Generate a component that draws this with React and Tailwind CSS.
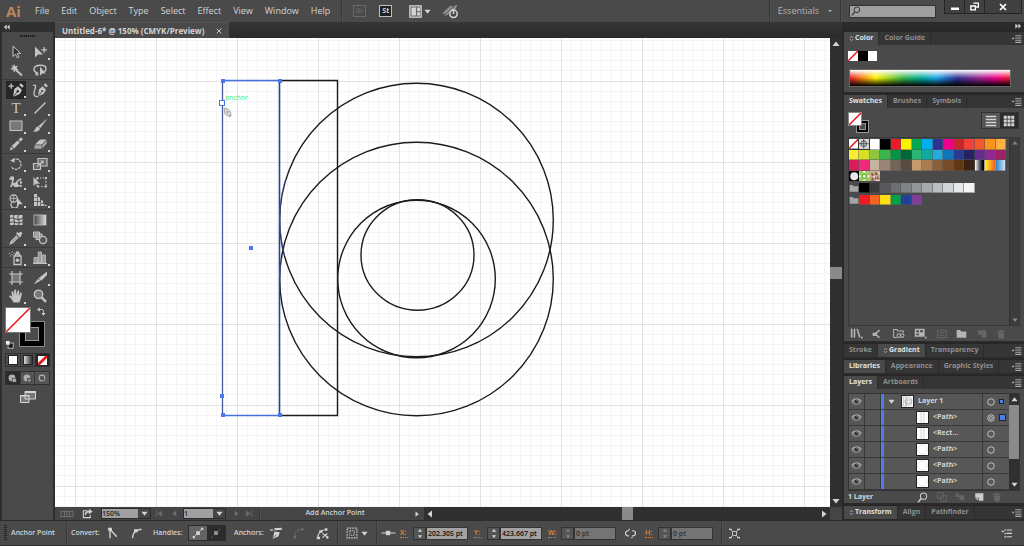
import React, { useState } from "react";
import clsx from "clsx";

const menus = ["File", "Edit", "Object", "Type", "Select", "Effect", "View", "Window", "Help"];

const Icon = ({ children, className = "w-4 h-4" }) => (
  <svg viewBox="0 0 16 16" fill="currentColor" className={clsx("shrink-0", className)} aria-hidden="true">
    {children}
  </svg>
);

const Line = ({ d, w = 1.2, ...rest }) => (
  <path d={d} fill="none" stroke="currentColor" strokeWidth={w} {...rest} />
);

/* Tool icons, all on a 16px grid */
const icons = {
  select: <path d="M5 2v10.5l2.6-2.4 1.7 3.8 1.7-.8-1.7-3.7h3.4z" fill="#333" stroke="currentColor" />,
  directSelect: (
    <>
      <path d="M3 2.5v11l3-2.9h5z" />
      <path d="M11.5 3h1.3v2.200H15v1.300h-2.200v2.200h-1.300V6.500H9.300V5.200h2.200z" />
    </>
  ),
  wand: (
    <>
      <path d="M6 1.500l1.100 2.800L10 3.500 8.500 6l2 2-2.900-.1L6 10.800 5.200 7.700 2 7l2.800-1.400L3.500 3l2.100 1z" />
      <Line d="M8 8l6 5.500" w={1.800} />
    </>
  ),
  lasso: (
    <>
      <Line d="M6 11c-3-.7-4.500-2.400-4-4.300C2.500 4.500 5 3.300 8.500 3.300s5.500 1.500 5.500 3.500c0 1.500-.8 2.600-2 3.300M6 11c-1.300-.5-2.500.2-2 1.300.4.900 2 .8 2.300-.3" w={1.400} />
      <path d="M8 4.500v9.200l2.200-2.100h3.400z" />
    </>
  ),
  pen: (
    <>
      <path d="M2.500 1.500h1.300v2h2v1.300h-2v2H2.500v-2h-2V3.500h2z" />
      <path d="M11.200 3l1.600-1.800 3 2.700-1.500 1.900zM5 15l1.300-8L10 4.300l4 3.600-2.300 4.100z" />
      <Line d="M5 15l4.500-5.500" w={0.800} stroke="#262626" />
      <circle cx="9.800" cy="9.200" r="1.200" fill="#262626" />
    </>
  ),
  curvature: (
    <>
      <path d="M11.700 3l1.500-1.800 2.600 2.500-1.500 1.900zM6 14.500l1-7 3.500-3.200 3.500 3.500-2.300 3.900z" />
      <Line d="M6 14.500l4-5" w={0.800} stroke="#4a4a4a" />
      <circle cx="10.200" cy="9" r="1.100" fill="#4a4a4a" />
      <Line d="M1 3.500c3-1.500 3 1 2 3.500S1 12 3 14c1 .8 2 .7 3 .3" w={1.300} />
    </>
  ),
  line: <Line d="M2.500 13.500l11-11" w={1.500} />,
  rect: <rect x="2" y="3" width="12" height="9.500" fill="#777" stroke="currentColor" />,
  brush: <path d="M14.500 1.500L8.200 9.800l-1.700-1.500zM5.800 8.800l1.900 1.700C7.500 13 4 14 1.500 13.300c1.600-.6 1.700-1.600 2-2.600.3-1.100 1.200-1.800 2.300-1.900z" stroke="currentColor" strokeWidth=".5" />,
  pencil: (
    <>
      <path d="M10.500 3.800L12.700 1.500c.8-.5 2.500 1.200 1.900 2l-2.200 2.300zM9.700 4.600l2 2-5.600 5.800-2.400-2.300z" />
      <path d="M3.100 10.800l2.300 2.100L1.700 14.500z" />
    </>
  ),
  eraser: (
    <>
      <path d="M8 3.500h6.500L10 8.500H3z" />
      <path d="M2.500 9.300h7v3.500h-7zM10.200 9.200l4.600-5v3.300l-4.600 5z" fill="#a5a5a5" />
    </>
  ),
  rotate: (
    <>
      <Line d="M5 3.800a5.200 5.200 0 0 1 8 4.500c0 2.700-2.100 5-5 5-2.200 0-4-1.200-4.800-3" strokeDasharray="2.500 1" w={1.300} />
      <path d="M2 4.500l4.500-2.300v4.600z" />
    </>
  ),
  scale: (
    <>
      <Line d="M6 2.500h9v7.500H6z" fill="#666" />
      <Line d="M1.500 7.500h7v6h-7z" fill="#666" />
      <Line d="M5 10.500l6-5M8.500 5H11v2.500" />
    </>
  ),
  warp: (
    <>
      <Line d="M1.500 5.500c3-3 4 0 3 2.500s1 4 3.500 1 2.500-4 5.500-4M3 13c0-3 3-4 5-3s3 3 6 1.500" w={1.600} />
      <path d="M2 2.500h4v3.500H3zM6 9h4v4H6zM12 6l2.500 2.500-2.500 2z" />
    </>
  ),
  freeTransform: (
    <>
      <Line d="M5 4h9v8.500H5z" strokeDasharray="1.500 1.500" />
      <path d="M1.500 3v9l2.500-2.300h4zM4.500 3h2v2h-2zM13 3h2v2h-2zM13 11.500h2v2h-2zM5 11.500h2v2H5z" />
    </>
  ),
  shapeBuilder: (
    <>
      <Line d="M2 6.500a3.700 3.700 0 1 1 7.400 0 3.700 3.700 0 1 1-7.400 0M5 9.500a3.500 3.500 0 1 0 5 3" />
      <Line d="M3 6.500h6M5.700 3v7" w={0.800} />
      <path d="M9 5.500v9l2.300-2.200h3.500z" />
    </>
  ),
  perspective: <path d="M2 2h3v3H2zM2 5.500h3v3.800H2zM2 10h3v4H2zM5.700 4.300l2.300 1.400v3.600H5.700zM5.700 10h2.600v4H5.700zM9 7.500l2 1.500v2.300H9zM9 12h2.800v2H9zM12.500 12.300L15.500 14h-3z" />,
  mesh: (
    <>
      <rect x="2" y="3" width="12.500" height="10" />
      <path d="M2 6.500c4-2 5 3 12.500 0M2 10.500c4-2 6 2 12.500-.5M6 3c-2 4 2 5 0 10M10.500 3c-2 4 2 5 0 10" fill="none" stroke="#444" />
    </>
  ),
  gradient: (
    <>
      <defs>
        <linearGradient id="tool-gradient">
          <stop offset="0" stopColor="#444" />
          <stop offset="1" stopColor="#ddd" />
        </linearGradient>
      </defs>
      <rect x="2" y="3" width="12" height="10" fill="url(#tool-gradient)" stroke="currentColor" strokeWidth=".8" />
    </>
  ),
  eyedropper: (
    <>
      <path d="M10.800 3.200c1-1.500 2-1.900 2.900-1s.6 2-.8 3l.6.700-1.500 1.500-4-4L9.500 2z" />
      <Line d="M9 5.800l-5.800 5.900-.7 1.900 1.900-.7L10.300 7" w={1.400} />
    </>
  ),
  blend: (
    <>
      <path d="M1.500 2h6v5h-6zM4 4h6v5.500H4z" fill="#888" stroke="currentColor" />
      <circle cx="11" cy="10" r="3.600" fill="#555" stroke="currentColor" strokeWidth="1.300" />
    </>
  ),
  sprayer: (
    <>
      <Line d="M6 6h7v8.500H6zM7.500 6V4h4v2" w={1.300} />
      <path d="M8 1.500h3V4H8zM1 3h1v1H1zM3.500 1.500h1v1h-1zM3.500 4h1v1h-1zM5.500 2.500h1v1h-1zM2 5.500h1v1H2z" />
      <circle cx="9.500" cy="10.200" r="1.800" />
    </>
  ),
  graph: (
    <>
      <path d="M2 7.500h3.500V13H2zM6.200 2h3.300v11H6.200zM10.200 5h3.300v8h-3.300z" fill="#999" stroke="currentColor" strokeWidth=".8" />
      <path d="M1 13h14v1H1z" />
    </>
  ),
  artboard: (
    <>
      <rect x="4" y="4" width="8" height="8" fill="#777" />
      <Line d="M4 1v14M12 1v14M1 4h14M1 12h14" />
    </>
  ),
  slice: (
    <>
      <path d="M15 1.500V5l-5.700 5.800-3-2.300z" />
      <path d="M6 9l2.500 1.800L1.500 14.500z" />
    </>
  ),
  hand: <path d="M5.500 14.500C4 12 2.500 9.500 1 8.300c.6-1.200 1.900-.8 3.200.8L3.400 4c.3-1.200 1.600-1.100 1.900 0l.8 3.500V2.300c.3-1.100 1.700-1.100 2 0l.4 4.900.9-4.300c.4-1 1.800-.8 1.800.4l-.5 4.700 1.400-3c.7-.9 1.900-.4 1.700.7-.6 2.900-1 6.200-2.600 8.800z" />,
  zoom: (
    <>
      <circle cx="6.500" cy="6.300" r="4.200" fill="#777" stroke="currentColor" strokeWidth="1.400" />
      <Line d="M9.500 9.300l4.500 4.500" w={2.400} />
    </>
  ),
};

const toolGroups = [
  [["Selection", "select"], ["Direct Selection", "directSelect", true], ["Magic Wand", "wand"], ["Lasso", "lasso"]],
  [
    ["Add Anchor Point", "pen", true],
    ["Curvature", "curvature"],
    ["Type", "type", true],
    ["Line Segment", "line", true],
    ["Rectangle", "rect", true],
    ["Paintbrush", "brush", true],
    ["Pencil", "pencil", true],
    ["Eraser", "eraser", true],
  ],
  [
    ["Rotate", "rotate", true],
    ["Scale", "scale", true],
    ["Width", "warp", true],
    ["Free Transform", "freeTransform"],
    ["Shape Builder", "shapeBuilder", true],
    ["Perspective Grid", "perspective", true],
  ],
  [["Mesh", "mesh"], ["Gradient", "gradient"], ["Eyedropper", "eyedropper", true], ["Blend", "blend"]],
  [["Symbol Sprayer", "sprayer", true], ["Column Graph", "graph", true]],
  [["Artboard", "artboard"], ["Slice", "slice", true], ["Hand", "hand", true], ["Zoom", "zoom"]],
];

const swatchRows = [
  [
    "none", "registration", "bg-white", "bg-black", "bg-[#ed1c24]", "bg-[#fff200]", "bg-[#00a651]", "bg-[#00aeef]",
    "bg-[#2e3192]", "bg-[#ec008c]", "bg-[#c1272d]", "bg-[#ef4136]", "bg-[#f15a29]", "bg-[#f7941e]", "bg-[#fbb040]",
  ],
  [
    "bg-[#f9ed32]", "bg-[#d7df23]", "bg-[#8dc63f]", "bg-[#39b54a]", "bg-[#009444]", "bg-[#006838]", "bg-[#2bb673]",
    "bg-[#13a89e]", "bg-[#27aae1]", "bg-[#1175bc]", "bg-[#2b3990]", "bg-[#262262]", "bg-[#662d91]", "bg-[#92278f]", "bg-[#9e1f63]",
  ],
  [
    "bg-[#da1c5c]", "bg-[#ee2a7b]", "bg-[#c2b59b]", "bg-[#9b8579]", "bg-[#726658]", "bg-[#594a42]", "bg-[#c49a6c]",
    "bg-[#a97c50]", "bg-[#8b5e3c]", "bg-[#754c29]", "bg-[#603913]", "bg-[#3c2415]",
    "bg-linear-to-r from-white to-black", "bg-linear-to-r from-[#fff200] to-[#f15a29]", "bg-linear-to-r from-[#1c85c9] to-[#cfe6f5]",
  ],
  ["dot", "leaf", "foliage"],
];

const swatchGroups = [
  [
    "bg-black", "bg-[#3a3a3c]", "bg-[#58595b]", "bg-[#6d6e71]", "bg-[#808285]", "bg-[#939598]",
    "bg-[#a7a9ac]", "bg-[#bcbec0]", "bg-[#d1d3d4]", "bg-[#e6e7e8]", "bg-[#f4f4f4]",
  ],
  ["bg-[#ed1c24]", "bg-[#f26522]", "bg-[#ffde17]", "bg-[#00a14b]", "bg-[#21409a]", "bg-[#7f3f98]"],
];

const layers = [
  { name: "Layer 1", kind: "layer", target: "small" },
  { name: "<Path>", kind: "bar", target: "large" },
  { name: "<Rect...", kind: "bar" },
  { name: "<Path>", kind: "circle" },
  { name: "<Path>", kind: "circle" },
  { name: "<Path>", kind: "circle" },
];

const Arrow = ({ dir = "down", className = "w-[7px] h-[7px]" }) => (
  <Icon className={className}>
    {dir === "down" && <path d="M1 4h14l-7 9z" />}
    {dir === "up" && <path d="M1 12h14L8 3z" />}
    {dir === "left" && <path d="M12 1v14L3 8z" />}
    {dir === "right" && <path d="M4 1v14l9-7z" />}
  </Icon>
);

const None = ({ className }) => (
  <svg viewBox="0 0 10 10" className={className} aria-hidden="true">
    <rect width="10" height="10" fill="#fff" />
    <path d="M0 10L10 0" stroke="#e8131b" strokeWidth="1.500" vectorEffect="non-scaling-stroke" />
  </svg>
);

const Divider = () => <div className="w-px self-stretch bg-[#383838] shadow-[1px_0_0_#515151]" />;

const MenuBar = () => (
  <header className="flex h-[22px] shrink-0 items-center bg-[#4a4a4a] text-[9px]">
    <span className="w-[35px] pl-[6px] text-[15px] leading-none font-bold text-[#bb865f]">Ai</span>
    <nav className="mr-[11px] flex gap-3">
      {menus.map((m) => (
        <button key={m} type="button">{m}</button>
      ))}
    </nav>
    <Divider />
    <button type="button" className="ml-[11px] h-3 w-[13px] border border-[#696969] text-center text-[7px] leading-[10px] text-[#707070]">Br</button>
    <button type="button" className="ml-[13px] h-3 w-[13px] border border-[#c0c0c0] bg-[#222] text-center text-[7px] leading-[10px] font-bold">St</button>
    <button type="button" aria-label="Arrange documents" className="ml-[17px] flex items-center gap-[2px]">
      <Icon className="h-[13px] w-[13px]">
        <rect x="1" y="1" width="14" height="14" fill="#6b6b6b" stroke="currentColor" strokeWidth="1.500" />
        <path d="M3 3h5.500v10H3zM10 3h3.500v4.500H10zM10 9h3.500v4H10z" />
      </Icon>
      <Arrow />
    </button>
    <button type="button" aria-label="GPU performance" className="ml-[11px]">
      <Icon>
        <path d="M0 10.500L8.500 2.500l2.500 1-7.500 7.500zM2 13L13 2.500l2.500-.5-2 4-3 1-5 5z" fill="#8c8c8c" />
        <circle cx="11.500" cy="10.800" r="3.700" fill="#4a4a4a" stroke="currentColor" strokeWidth="1.500" />
        <Line d="M11.500 6v5" w={1.500} />
      </Icon>
    </button>
    <div className="grow" />
    <Divider />
    <button type="button" className="mx-2 flex items-center gap-[9px] text-[#b5b5b5]">
      Essentials
      <Arrow className="h-1 w-1" />
    </button>
    <Divider />
    <label className="mx-2 flex h-[13px] items-center border border-[#333] bg-[#a0a0a0] pl-px text-[#333]">
      <Icon className="h-[10px] w-[10px]">
        <circle cx="9.500" cy="6" r="4.500" fill="none" stroke="currentColor" strokeWidth="1.500" />
        <Line d="M6 9.500L1.500 15" w={2} />
      </Icon>
      <input type="search" aria-label="Search" className="h-full w-[74px] outline-none" />
    </label>
    <div className="mr-[2px] flex h-[14px] self-start border border-t-0 border-[#252525] bg-[#404040] text-white">
      <button type="button" aria-label="Minimize" className="flex w-5 items-center justify-center border-r border-[#252525]">
        <Icon className="h-2 w-2"><path d="M0 9h16v5H0z" /></Icon>
      </button>
      <button type="button" aria-label="Restore" className="flex w-5 items-center justify-center border-r border-[#252525]">
        <Icon className="h-[9px] w-[9px]">
          <Line d="M6 2h9v7h-4M1.500 7h8v7h-8z" w={2.500} />
        </Icon>
      </button>
      <button type="button" aria-label="Close" className="flex w-9 items-center justify-center">
        <Icon className="h-2 w-2"><Line d="M2 2l12 12M14 2L2 14" w={3.500} /></Icon>
      </button>
    </div>
  </header>
);

const Toolbar = ({ tool, setTool }) => (
  <aside className="flex w-[55px] shrink-0 flex-col border-x-2 border-[#2e2e2e] bg-[#4a4a4a]">
    <div className="flex h-[10px] items-center bg-[#303030] pl-[2px]">
      <Icon className="h-[6px] w-[6px]"><path d="M7 1v14L0 8zM15 1v14L8 8z" /></Icon>
    </div>
    <div className="flex h-[11px] justify-center pt-[3px]">
      <div className="h-[2px] w-[15px] bg-[repeating-linear-gradient(90deg,#1c1c1c_0_1px,#3c3c3c_1px_2px)]" />
    </div>
    {toolGroups.map((group, i) => (
      <div key={i} className={clsx("grid grid-cols-2 px-[2px]", i > 0 && "border-t border-[#3a3a3a] pt-px")}>
        {group.map(([label, icon, more]) => (
          <button
            key={label}
            type="button"
            aria-label={label}
            onClick={() => setTool(icon)}
            className={clsx("relative mx-[2px] flex h-[18px] w-5 items-center justify-center text-[#c4c4c4]", tool === icon && "bg-[#262626]")}
          >
            {icon === "type" ? (
              <span className="font-['Liberation_Serif'] text-[15px] leading-none">T</span>
            ) : (
              <Icon>{icons[icon]}</Icon>
            )}
            {more && <span className="absolute right-0 bottom-px h-[2px] w-[2px] bg-[#d5d5d5]" />}
          </button>
        ))}
      </div>
    ))}
    {/* Fill and stroke */}
    <div className="relative mx-[3px] mt-[2px] h-[42px]">
      <div className="absolute top-[14px] left-[14px] h-[26px] w-[26px] border border-[#888] bg-black p-[5px]">
        <div className="h-full w-full border border-[#999] bg-[#4a4a4a]" />
      </div>
      <None className="absolute top-0 left-0 h-[26px] w-[26px] border border-[#777]" />
      <button type="button" aria-label="Swap fill and stroke" className="absolute top-0 left-8">
        <Icon className="h-[9px] w-[9px]">
          <Line d="M4 4.500h4.500a3 3 0 0 1 3 3V12" w={1.500} />
          <path d="M0 4.500L5 1v7zM8 10.500h7l-3.500 5z" />
        </Icon>
      </button>
      <button type="button" aria-label="Default fill and stroke" className="absolute bottom-0 left-0">
        <Icon className="h-[9px] w-[9px]">
          <rect x="5.500" y="5.500" width="9" height="9" fill="#111" stroke="currentColor" strokeWidth="1.500" />
          <rect x="1" y="1" width="8" height="8" fill="#eee" stroke="#222" />
        </Icon>
      </button>
    </div>
    <div className="mx-[3px] mt-1 flex h-[14px] border border-[#303030]">
      <button type="button" aria-label="Color" className="flex grow items-center justify-center">
        <span className="h-[10px] w-[10px] border border-[#222] bg-white" />
      </button>
      <button type="button" aria-label="Gradient fill" className="flex grow items-center justify-center border-x border-[#303030]">
        <span className="h-[10px] w-[10px] border border-[#222] bg-linear-to-r from-[#ddd] to-[#333]" />
      </button>
      <button type="button" aria-label="None" className="flex grow items-center justify-center bg-[#262626]">
        <svg viewBox="0 0 10 10" className="h-[9px] w-[9px]">
          <rect width="10" height="10" fill="#fff" />
          <path d="M0 10L10 0" stroke="#e8131b" strokeWidth="3" />
        </svg>
      </button>
    </div>
    <div className="mx-[3px] mt-1 flex h-[14px] border border-[#303030] text-[#b0b0b0]">
      {["Draw Normal", "Draw Behind", "Draw Inside"].map((label, i) => (
        <button key={label} type="button" aria-label={label} className={clsx("flex grow items-center justify-center", i === 0 ? "bg-[#2c2c2c]" : "border-l border-[#3a3a3a] bg-[#555]")}>
          <Icon className="h-[9px] w-[9px]">
            <circle cx="7" cy="7" r="5" fill={i === 2 ? "none" : "currentColor"} stroke="currentColor" strokeWidth="2" />
            <rect x="7.500" y="7.500" width={i === 2 ? 3 : 7} height={i === 2 ? 3 : 7} fill={i === 1 ? "#888" : "currentColor"} stroke="#333" />
          </Icon>
        </button>
      ))}
    </div>
    <button type="button" aria-label="Screen mode" className="mt-1 self-center">
      <Icon className="h-4 w-4">
        <path d="M5 2.500h10.500v7.500H5zM.5 6.500h8.500v7H.5z" fill="#777" stroke="currentColor" />
        <path d="M5 2h11v2H5zM0 6h9.500v1.500H0z" />
      </Icon>
    </button>
  </aside>
);

const Canvas = () => (
  <svg className="block h-full w-full" role="img" aria-label="Artboard">
    <defs>
      <pattern id="grid" x="20" y="43" width="81" height="81" patternUnits="userSpaceOnUse">
        <path
          d="M10.500 0v81M20.500 0v81M30.500 0v81M40.500 0v81M50.500 0v81M60.500 0v81M70.500 0v81M0 10.500h81M0 20.500h81M0 30.500h81M0 40.500h81M0 50.500h81M0 60.500h81M0 70.500h81"
          stroke="#f4f4f4"
        />
        <path d="M.5 0v81M0 .5h81" stroke="#e2e2e2" />
      </pattern>
    </defs>
    <rect width="100%" height="100%" fill="#fff" />
    <rect width="100%" height="100%" fill="url(#grid)" />
    <g fill="none" stroke="#1c1c1c" strokeWidth="1.400">
      <path d="M224.500 42.500h58v335h-58" />
      <circle cx="361.500" cy="182" r="136.800" />
      <circle cx="361.500" cy="241" r="136.800" />
      <circle cx="361.500" cy="241" r="78.800" />
      <ellipse cx="362.500" cy="217" rx="56.500" ry="55.300" />
    </g>
    {/* Selected path */}
    <path d="M224.500 42.500h-57M167.500 377.500h57" fill="none" stroke="#4a70e0" strokeWidth="1.400" />
    <path d="M167.500 42.500v335" stroke="#46599c" strokeWidth="1.300" />
    <path d="M224.500 43v334" stroke="#2b3f8c" strokeWidth="1.600" />
    <path d="M224.700 180c.2-12 1.800-26 6-39M224.700 180c.2 14 2 27 5 38M224.700 240c0-8 1-16 3-23" fill="none" stroke="#4a70e0" strokeWidth=".5" />
    <path d="M166 41h4v4h-4zM223 41h4v4h-4zM166 375h4v4h-4zM223 375h4v4h-4zM165 356h4v4h-4zM194 208h4v4h-4z" fill="#4a78f0" />
    <rect x="164.500" y="62.500" width="5" height="5" fill="#fff" stroke="#4a78f0" />
    <text x="170" y="62" fontSize="7" fill="#3df03d" fontFamily="Open Sans, sans-serif">anchor</text>
    <path d="M169 70l4 1 3 4-2 3-4-2z" fill="#ddd" stroke="#aaa" />
    <circle cx="172.500" cy="74" r="1" fill="#999" />
    <path d="M174 79l2.500-2" stroke="#aaa" strokeWidth="1.500" />
  </svg>
);

const Select = ({ label, value, className }) => (
  <div className={clsx("relative flex h-[11px] border border-[#2c2c2c]", className)}>
    <select aria-label={label} defaultValue={value} className="w-full appearance-none bg-[#a0a0a0] text-[7px] leading-[9px] font-semibold text-[#222] outline-none">
      <option>{value}</option>
    </select>
    <span className="pointer-events-none absolute inset-y-0 right-0 flex w-3 items-center justify-center bg-[#454545]">
      <Arrow />
    </span>
  </div>
);

const StatusBar = () => (
  <div className="flex h-[13px] shrink-0 items-center bg-[#454545] text-[7px]">
    <Icon className="ml-[5px] h-[14px] w-[14px] text-[#777]">
      <Line d="M1 5h14v6H1zM5 5v6M8 5v6M11 5v6" w={1} />
    </Icon>
    <Icon className="ml-2 h-[11px] w-[11px]">
      <Line d="M8 4H2v10h10v-4" w={1.500} />
      <Line d="M5 10c0-3 2-5 6-5" w={2} />
      <path d="M10 1l5.500 4L10 9z" />
    </Icon>
    <Select label="Zoom level" value="150%" className="ml-2 w-[50px]" />
    <div className="flex w-8 justify-center gap-2 text-[#6c6c6c]">
      <Icon className="h-[7px] w-[7px]"><path d="M1 1h2v14H1zM14 1v14L4 8z" /></Icon>
      <Arrow dir="left" />
    </div>
    <Select label="Artboard" value="1" className="w-[43px]" />
    <div className="flex w-[33px] justify-center gap-[5px] text-[#6c6c6c]">
      <Arrow dir="right" />
      <Icon className="h-[7px] w-[7px]"><path d="M13 1h2v14h-2zM2 1v14l10-7z" /></Icon>
    </div>
    <Divider />
    <span className="w-[150px] text-center font-semibold">Add Anchor Point</span>
    <button type="button" aria-label="Status options" className="mx-1"><Arrow dir="right" className="h-[6px] w-[6px]" /></button>
    <div className="flex h-full grow items-center justify-between bg-[#303030] px-[2px]">
      <Arrow dir="left" className="h-2 w-2" />
      <div className="h-full w-[11px] bg-[#8a8a8a]" />
      <Arrow dir="right" className="h-2 w-2" />
    </div>
    <div className="w-3" />
  </div>
);

const Tabs = ({ tabs, active, arrows = true }) => (
  <div className="flex h-[14px] shrink-0 items-stretch border-t border-[#262626] bg-[#353535] text-[7px] font-bold whitespace-nowrap" role="tablist">
    {tabs.map((tab) => (
      <button
        key={tab}
        type="button"
        role="tab"
        aria-selected={tab === active}
        className={clsx(
          "flex items-center gap-px border-r border-[#2b2b2b] px-[5px]",
          tab === active ? "bg-[#4a4a4a] text-[#e0e0e0]" : "text-[#8f8f8f]"
        )}
      >
        {tab === active && arrows && (
          <Icon className="h-[7px] w-[5px]"><Line d="M3 6l5-5 5 5M3 10l5 5 5-5" w={2} /></Icon>
        )}
        {tab}
      </button>
    ))}
    <button type="button" aria-label="Panel menu" className="mr-[2px] ml-auto flex items-center text-[#a8a8a8]">
      <Icon className="h-[10px] w-[11px]"><path d="M0 6h5L2.500 9zM6 2h10v1.700H6zM6 5.500h10v1.700H6zM6 9h10v1.700H6zM6 12.500h10v1.700H6z" /></Icon>
    </button>
  </div>
);

const Swatch = ({ kind }) => {
  if (kind === "none") return <None className="h-full w-full border-r border-b border-[#333]" />;
  if (kind === "registration")
    return (
      <svg viewBox="0 0 10 10" className="h-full w-full border-r border-b border-[#333] bg-[#d4d4d4]">
        <path d="M0 5h10M5 0v10M2 5a3 3 0 1 0 6 0 3 3 0 1 0-6 0" fill="none" stroke="#333" strokeWidth=".8" />
      </svg>
    );
  if (kind === "dot")
    return (
      <svg viewBox="0 0 10 10" className="h-full w-full bg-black">
        <circle cx="5" cy="5" r="3.800" fill="#e8e8e8" />
      </svg>
    );
  if (kind === "leaf")
    return (
      <svg viewBox="0 0 10 10" className="h-full w-full bg-[#9bd05a]">
        <path d="M4 0h2v2H4zM0 4h2v2H0zM8 4h2v2H8zM4 8h2v2H4z" fill="#e8f6d4" />
        <circle cx="5" cy="5" r="2" fill="#fff" stroke="#69a832" />
      </svg>
    );
  if (kind === "foliage")
    return (
      <svg viewBox="0 0 10 10" className="h-full w-full bg-[#c6a893]">
        <path d="M1 2l3 1-2 2zM5 1l3 2-3 1zM7 5l2 3-3-1zM2 6l2 3-3 0zM5 5l1 3-2-1z" fill="#85503c" />
        <path d="M8 1l1 2M3 5l2 1M6 9l3 0" stroke="#efe0d0" />
      </svg>
    );
  return <span className={clsx("border-r border-b border-[#55555580]", kind)} />;
};

const Folder = () => (
  <Icon className="h-[10px] w-[10px] self-center text-[#a5a5a5]"><path d="M1 3h5l1.500 2H15v9H1z" /></Icon>
);

const TrashIcon = () => (
  <Icon className="h-[10px] w-[10px] text-[#666]"><path d="M2 3h4V1h4v2h4v2H2zM3 6h10l-1 9H4z" /></Icon>
);

const SwatchesPanel = () => (
  <section className="flex grow flex-col bg-[#4a4a4a]">
    <Tabs tabs={["Swatches", "Brushes", "Symbols"]} active="Swatches" arrows={false} />
    <div className="flex items-start justify-between px-1 pt-1">
      <div className="relative h-6 w-6">
        <div className="absolute top-2 left-2 h-[13px] w-[13px] border border-[#999] bg-black p-[2px]">
          <div className="h-full w-full border border-[#999] bg-[#4a4a4a]" />
        </div>
        <None className="absolute top-0 left-0 h-[14px] w-[14px] border border-[#888]" />
      </div>
      <div className="mr-px flex h-[17px] w-[38px] border border-[#333]">
        <button type="button" aria-label="List view" className="flex grow items-center justify-center bg-[#555]">
          <Icon className="h-3 w-3"><path d="M1 1h14v2H1zM1 5h14v2H1zM1 9h14v2H1zM1 13h14v2H1z" /></Icon>
        </button>
        <button type="button" aria-label="Thumbnail view" className="flex grow items-center justify-center bg-[#2c2c2c]">
          <Icon className="h-3 w-3">
            <path d="M1 1h4v4H1zM6 1h4v4H6zM11 1h4v4h-4zM1 6h4v4H1zM6 6h4v4H6zM11 6h4v4h-4zM1 11h4v4H1zM6 11h4v4H6zM11 11h4v4h-4z" />
          </Icon>
        </button>
      </div>
    </div>
    <div className="mx-1 mt-px flex grow border border-[#383838]">
      <div className="grow pt-px">
        <div className="grid h-[42px] w-[157px] grid-rows-4">
          {swatchRows.map((row, i) => (
            <div key={i} className="grid grid-cols-15">
              {row.map((kind) => <Swatch key={kind} kind={kind} />)}
            </div>
          ))}
        </div>
        {swatchGroups.map((row, i) => (
          <div key={i} className="mt-[2px] grid h-[10px] w-[157px] grid-cols-15">
            <Folder />
            {row.map((kind) => <Swatch key={kind} kind={kind} />)}
          </div>
        ))}
      </div>
      <div className="flex w-[10px] flex-col items-center justify-between border-l border-[#333] bg-[#3c3c3c] py-[2px] text-[#888]">
        <Arrow dir="up" className="h-[6px] w-[6px]" />
        <Arrow className="h-[6px] w-[6px]" />
      </div>
    </div>
    <div className="flex h-[15px] items-center justify-between pr-[18px] pl-[6px] text-[#b5b5b5]">
      <Icon className="h-[13px] w-[13px]">
        <path d="M1 2h2v11H1zM4.500 2h2v11h-2zM8 2.500l1.800-.5L13 12.500l-2 .5zM13.500 12h2v2h-2z" />
      </Icon>
      <Icon className="h-[10px] w-[10px]">
        <Line d="M12 2L5 8l7 6" w={2.500} />
        <path d="M1 6h7v5H1z" />
      </Icon>
      <Icon className="h-[13px] w-[13px]">
        <Line d="M2 13V3h4l1 2h7v2M2 13h4" w={1.300} />
        <circle cx="8.500" cy="10.500" r="2.300" fill="none" stroke="currentColor" strokeWidth="1.300" />
        <circle cx="12.500" cy="10.500" r="2.300" fill="none" stroke="currentColor" strokeWidth="1.300" />
      </Icon>
      <Icon className="h-[13px] w-[13px]"><path d="M1 2h12v10H1zM13.500 12h2v2h-2z" /><path d="M3 4h3v2.500H3zM7.500 4H11v2.500H7.500zM3 8h3v2H3z" fill="#4a4a4a" /></Icon>
      <Icon className="h-[10px] w-[10px] text-[#6c6c6c]"><Line d="M1 2h14v12H1zM4 6h8M4 10h8" w={1.500} /></Icon>
      <Icon className="h-[11px] w-[11px]"><path d="M1 3h5l1.500 2H15v9H1z" /></Icon>
      <Icon className="h-[10px] w-[10px] text-[#666]"><path d="M2 2h13v12H8V9H2z" /></Icon>
      <TrashIcon />
    </div>
  </section>
);

const Thumb = ({ kind }) => (
  <svg viewBox="0 0 12 12" className="h-[13px] w-[13px] shrink-0 border border-[#222] bg-white" aria-hidden="true">
    {kind === "bar" && <path d="M4.500 0v12M7.500 0v12" stroke="#d0d0d0" />}
    {kind === "circle" && <circle cx="6" cy="6" r="5" fill="none" stroke="#e0e0e0" strokeWidth=".7" />}
    {kind === "layer" && (
      <g fill="none" stroke="#999" strokeWidth=".6">
        <path d="M1.500 1v10h3V1z" />
        <circle cx="7" cy="5" r="3.800" />
        <circle cx="7" cy="7" r="3.800" />
        <circle cx="7" cy="6.500" r="1.800" />
      </g>
    )}
  </svg>
);

const LayersPanel = () => (
  <section className="shrink-0 bg-[#4a4a4a]">
    <Tabs tabs={["Layers", "Artboards"]} active="Layers" arrows={false} />
    <div className="mx-1 mt-1 flex border border-[#333] text-[7px] font-bold">
      <ul className="grow">
        {layers.map((layer, i) => (
          <li key={i} className="flex h-4 items-stretch border-b border-[#383838] bg-[#575757]">
            <button type="button" aria-label="Toggle visibility" className="flex w-4 items-center justify-center border-r border-[#383838] text-[#aaa]">
              <Icon className="h-[11px] w-[11px]">
                <path d="M1 9c3-6 11-6 14 0-3 5-11 5-14 0z" fill="#888" />
                <Line d="M1 8c3-5.500 11-5.500 14 0" w={1.500} />
                <circle cx="8" cy="8" r="3" fill="#333" />
                <circle cx="9" cy="7" r="1" />
              </Icon>
            </button>
            <span className="w-4 border-r border-[#383838]" />
            <span className="w-[3px] bg-[#4f7cf2]" />
            <span className={clsx("flex grow items-center", layer.kind === "layer" ? "pl-1" : "pl-8")}>
              {layer.kind === "layer" && <Arrow className="mr-[6px] h-[7px] w-[7px]" />}
              <Thumb kind={layer.kind} />
              <span className="ml-1">{layer.name}</span>
            </span>
            <span className="flex w-[27px] items-center gap-1 border-l border-[#383838] pl-[4px]">
              <Icon className="h-[8px] w-[8px]">
                <circle cx="8" cy="8" r="6.500" fill="none" stroke="currentColor" strokeWidth="1.700" />
                {layer.target === "large" && <circle cx="8" cy="8" r="3" fill="none" stroke="currentColor" strokeWidth="1.500" />}
              </Icon>
              {layer.target && (
                <span className={clsx("border border-[#222] bg-[#4f7cf2]", layer.target === "large" ? "h-[7px] w-[7px]" : "h-[5px] w-[5px]")} />
              )}
            </span>
          </li>
        ))}
      </ul>
      <div className="flex w-[10px] flex-col items-center bg-[#303030] py-[2px]">
        <Arrow dir="up" />
        <div className="mt-[2px] h-[54px] w-full bg-[#8a8a8a]" />
        <Arrow className="mt-auto h-[7px] w-[7px]" />
      </div>
    </div>
    <div className="flex h-3 items-center px-1 text-[7px] font-bold">
      <span className="w-[69px]">1 Layer</span>
      <div className="flex grow items-center justify-between pr-[18px] text-[#666]">
        <Icon className="h-[11px] w-[11px] text-[#ccc]">
          <circle cx="9.500" cy="6" r="4.500" fill="none" stroke="currentColor" strokeWidth="1.500" />
          <Line d="M6 9.500L1.500 15" w={2} />
        </Icon>
        <Icon className="h-[10px] w-[10px]"><Line d="M1 1h9v9H1zM6 6h9v9H6z" w={1.500} /></Icon>
        <Icon className="h-[10px] w-[10px]"><path d="M1 2h4v3h10v8H7V8H1z" /></Icon>
        <Icon className="h-[10px] w-[10px] text-[#ccc]"><path d="M2 2h13v12H8V9H2zM2 10l5 4v-4z" /></Icon>
        <TrashIcon />
      </div>
    </div>
  </section>
);

const Panels = () => (
  <aside className="flex w-[182px] shrink-0 flex-col gap-[2px] border-b border-l-2 border-[#2a2a2a] bg-[#2a2a2a]">
    <div className="flex h-[7px] shrink-0 items-center justify-end pr-[3px]">
      <Icon className="h-[6px] w-[6px]"><path d="M1 1v14l7-7zM9 1v14l7-7z" /></Icon>
    </div>
    <section className="shrink-0 bg-[#4a4a4a] pb-[5px]">
      <Tabs tabs={["Color", "Color Guide"]} active="Color" />
      <div className="mt-[6px] ml-1 flex h-[10px]">
        <None className="w-[10px]" />
        <span className="w-[10px] bg-black" />
        <span className="w-[9px] bg-white" />
      </div>
      <div className="mt-2 mr-[13px] ml-[5px] h-[18px] border border-[#666] bg-[linear-gradient(180deg,#fff,#fff0_50%,#0000_50%,#000),linear-gradient(90deg,#ed1c24,#fff200_16%,#39b54a_33%,#00a99d_45%,#1ca5e8_54%,#2e3192_67%,#93278f_80%,#ec008c_91%,#ed1c24)]" />
    </section>
    <SwatchesPanel />
    <Tabs tabs={["Stroke", "Gradient", "Transparency"]} active="Gradient" />
    <Tabs tabs={["Libraries", "Appearance", "Graphic Styles"]} active="Libraries" arrows={false} />
    <LayersPanel />
    <Tabs tabs={["Transform", "Align", "Pathfinder"]} active="Transform" />
  </aside>
);

const Field = ({ label, value, disabled }) => (
  <label className="flex items-center">
    <span className="mr-[5px] w-2 border-b border-dotted border-[#d98032] leading-[9px] text-[#e08a3a]">{label}:</span>
    <span className={clsx("flex h-[13px] w-[13px] flex-col items-center justify-center gap-px border border-[#333] bg-[#555]", disabled && "text-[#888]")}>
      <Arrow dir="up" className="h-[5px] w-[6px]" />
      <Arrow className="h-[5px] w-[6px]" />
    </span>
    <input
      type="text"
      defaultValue={value}
      disabled={disabled}
      className={clsx("h-[13px] w-[42px] border border-[#333] pl-px outline-none", disabled ? "bg-[#747474] text-[#333]" : "bg-[#a3a3a3] text-[#111]")}
    />
  </label>
);

const ControlBar = () => (
  <footer className="flex h-[26px] shrink-0 items-center border-y border-[#2c2c2c] bg-[#4a4a4a] text-[7px] font-semibold">
    <div className="mx-[4px] h-4 w-[3px] bg-[repeating-linear-gradient(#222_0_1px,#4a4a4a_1px_2px)]" />
    <span className="w-[55px]">Anchor Point</span>
    <Divider />
    <span className="ml-1 w-9">Convert:</span>
    <button type="button" aria-label="Convert to corner"><Icon className="h-3 w-3"><Line d="M4 15V3l9 10" w={1.800} /><path d="M1.500 1h5v4h-5z" /></Icon></button>
    <button type="button" aria-label="Convert to smooth" className="ml-3"><Icon className="h-3 w-3"><Line d="M2 15C2 9 5 4 14 3" w={1.800} /><path d="M4 3h5v4H4z" /></Icon></button>
    <span className="ml-[10px] w-[35px]">Handles:</span>
    <div className="flex h-4 w-[38px] border border-[#2c2c2c]">
      <button type="button" aria-label="Show handles" className="flex grow items-center justify-center bg-[#636363]">
        <Icon className="h-3 w-3"><Line d="M2 14L14 2" strokeDasharray="2 1" /><path d="M5.500 5.500h5v5h-5zM1 12h3v3H1zM12 1h3v3h-3z" /></Icon>
      </button>
      <button type="button" aria-label="Hide handles" className="flex grow items-center justify-center bg-[#2c2c2c] text-[#999]">
        <Icon className="h-3 w-3"><path d="M5.500 5.500h5v5h-5z" /><Line d="M2 14l3-3M11 5l3-3" strokeDasharray="1 1" /></Icon>
      </button>
    </div>
    <span className="ml-2 w-9">Anchors:</span>
    <button type="button" aria-label="Remove anchor">
      <Icon className="h-[13px] w-[13px]">
        <path d="M5 1.500l9-.5 1 2.500-9 .5zM5.500 5.500l6.500 1-1.500 5L3 15z" />
        <Line d="M3 15l4.500-5.500" w={1} stroke="#4a4a4a" />
        <path d="M0 3h4v1.500H0z" />
      </Icon>
    </button>
    <button type="button" aria-label="Connect end points" className="ml-[10px] text-[#707070]"><Icon className="h-3 w-3"><Line d="M2 14C2 8 6 3 13 3" /><path d="M1 12h3v3H1zM11 1.500h3v3h-3z" /></Icon></button>
    <button type="button" aria-label="Cut path" className="mr-2 ml-[11px]">
      <Icon className="h-[13px] w-[13px]"><Line d="M2 14C2 8 6 3 13 3M8 8l6 4M8 13l6-5" w={1.300} /><path d="M1 12h4v3H1zM4 4h4v3H4zM11 1.500h3v3h-3z" /><circle cx="14" cy="13" r="1.500" /></Icon>
    </button>
    <Divider />
    <button type="button" aria-label="Isolate" className="mx-2 flex items-center gap-[3px]">
      <Icon className="h-3 w-3"><Line d="M1.500 1.500h13v13h-13z" strokeDasharray="2 1.500" w={1.500} /><Line d="M5 5h6v6H5z" strokeDasharray="1.500 1" /></Icon>
      <Arrow />
    </button>
    <Divider />
    <Icon className="mr-1 ml-1 h-[14px] w-[15px]"><Line d="M0 8h16" /><path d="M5 5.500h5v5H5z" /></Icon>
    <div className="flex items-center gap-[6px]">
      <Field label="X" value="202.305 pt" />
      <Field label="Y" value="423.667 pt" />
      <Field label="W" value="0 pt" disabled />
      <button type="button" aria-label="Constrain proportions" className="px-[3px]">
        <Icon className="h-[11px] w-[11px]"><Line d="M6 4H4.500a3.500 3.500 0 0 0 0 7.500H6M10 4h1.500a3.500 3.500 0 0 1 0 7.500H10M6 1v2M10 13v2" w={1.800} /></Icon>
      </button>
      <Field label="H" value="0 pt" disabled />
    </div>
    <div className="mr-[7px] ml-2 flex self-stretch"><Divider /></div>
    <button type="button" aria-label="Transform"><Icon className="h-[11px] w-[11px]"><Line d="M5 5h6v6H5zM1 1l4 4M15 1l-4 4M1 15l4-4M15 15l-4-4" w={1.300} /><path d="M0 1h4v2H0zM12 1h4v2h-4zM0 13h4v2H0zM12 13h4v2h-4z" /></Icon></button>
    <button type="button" aria-label="Control bar menu" className="mr-3 ml-auto">
      <Icon className="h-[11px] w-[11px]"><path d="M0 4h5L2.500 7zM5 2h2v2H5zM8 2h8v1.600H8zM5 7h2v2H5zM8 7h8v1.600H8zM5 12h2v2H5zM8 12h8v1.600H8z" /></Icon>
    </button>
  </footer>
);

const App = () => {
  const [tool, setTool] = useState("pen");

  return (
    <div className="flex h-screen flex-col bg-[#2e2e2e] font-['Open_Sans',sans-serif] text-[#d4d4d4]">
      <MenuBar />
      <div className="flex min-h-0 grow">
        <Toolbar tool={tool} setTool={setTool} />
        <main className="flex min-w-0 grow flex-col">
          <div className="flex h-4 shrink-0 bg-linear-to-b from-[#363636] to-[#2a2a2a]">
            <div className="flex items-center gap-3 border-t border-[#555] bg-[#4a4a4a] px-[7px] text-[8px] font-bold">
              Untitled-6* @ 150% (CMYK/Preview)
              <button type="button" aria-label="Close document">
                <Icon className="h-[6px] w-[6px]"><Line d="M2 2l12 12M14 2L2 14" w={2.500} /></Icon>
              </button>
            </div>
          </div>
          <div className="flex min-h-0 grow">
            <div className="min-w-0 grow"><Canvas /></div>
            <div className="flex w-3 shrink-0 flex-col items-center justify-between bg-[#303030] py-[2px]">
              <Arrow dir="up" className="h-2 w-2" />
              <div className="h-3 w-full bg-[#8a8a8a]" />
              <Arrow className="h-2 w-2" />
            </div>
          </div>
          <StatusBar />
        </main>
        <Panels />
      </div>
      <ControlBar />
    </div>
  );
};

export default App;
